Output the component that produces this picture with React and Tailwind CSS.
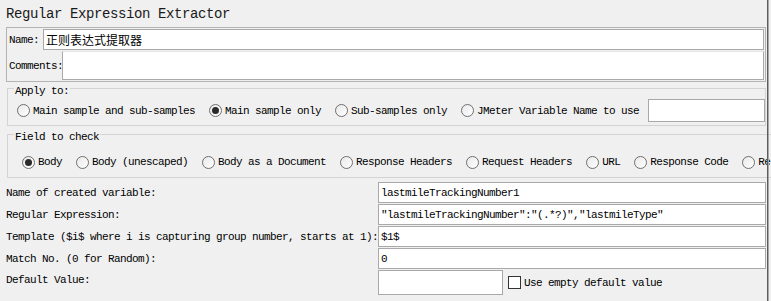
const mono = { fontFamily: "'Liberation Mono', 'Noto Sans CJK SC', monospace" }

function Radio({ label, checked }) {
  return (
    <span className="inline-flex shrink-0 items-center whitespace-nowrap">
      <span className="flex h-[13px] w-[13px] items-center justify-center rounded-full border border-[#6f6f6f] bg-gradient-to-br from-[#e9e9e9] to-white">
        {checked ? <span className="h-[7px] w-[7px] rounded-full bg-[#2a2a2a]" /> : null}
      </span>
      <span className="ml-[3px]">{label}</span>
    </span>
  )
}

function Field({ value, className = '' }) {
  return (
    <div className={`flex h-[21px] items-center border border-[#a9a9a9] bg-white px-[2px] ${className}`}>
      <span className="whitespace-nowrap">{value}</span>
    </div>
  )
}

const applyOptions = [
  { label: 'Main sample and sub-samples' },
  { label: 'Main sample only', checked: true },
  { label: 'Sub-samples only' },
  { label: 'JMeter Variable Name to use' },
]

const fieldOptions = [
  { label: 'Body', checked: true },
  { label: 'Body (unescaped)' },
  { label: 'Body as a Document' },
  { label: 'Response Headers' },
  { label: 'Request Headers' },
  { label: 'URL' },
  { label: 'Response Code' },
  { label: 'Response Message' },
]

const rows = [
  { label: 'Name of created variable:', value: 'lastmileTrackingNumber1' },
  { label: 'Regular Expression:', value: '"lastmileTrackingNumber":"(.*?)","lastmileType"' },
  { label: 'Template ($i$ where i is capturing group number, starts at 1):', value: '$1$' },
  { label: 'Match No. (0 for Random):', value: '0' },
]

export default function App() {
  return (
    <div className="flex h-[301px] w-[771px] overflow-hidden bg-[#f0f0f0] text-[11px] leading-[12px] tracking-[-0.6px] text-black" style={mono}>
      <div className="w-[767px] shrink-0 pr-[1px]">
        <div className="flex h-[27px] items-center pl-[6px] text-[14px] tracking-[-0.4px] text-[#1a1a1a]">
          Regular Expression Extractor
        </div>

        <div className="ml-[6px] border border-[#b4b4b4] p-[1px]">
          <div className="flex h-[21px] items-center">
            <span className="w-[35px] pl-[1px]">Name:</span>
            <div className="flex h-[21px] flex-1 items-center border border-[#a9a9a9] bg-white px-[2px] text-[12px] tracking-normal" style={{ fontFamily: "'Noto Sans CJK SC', sans-serif" }}>
              正则表达式提取器
            </div>
          </div>
          <div className="mt-[1px] flex h-[29px] items-center">
            <span className="w-[54px] pl-[1px]">Comments:</span>
            <div className="h-[29px] flex-1 border border-[#a9a9a9] border-t-[#e6e6e6] bg-white" />
          </div>
        </div>

        <fieldset className="ml-[7px] mt-[-3px] border border-[#d3d3d3] pb-[3px] pl-[9px]">
          <legend className="ml-[-3px] px-[1px] pt-[6px]">Apply to:</legend>
          <div className="mt-[2px] flex h-[23px] items-center gap-[14px]">
            {applyOptions.map((o) => (
              <Radio key={o.label} label={o.label} checked={o.checked} />
            ))}
            <div className="ml-[-5px] h-[23px] flex-1 border border-[#a9a9a9] bg-white" />
          </div>
        </fieldset>

        <fieldset className="ml-[7px] mt-[-1px] border border-[#d3d3d3] pb-[4px] pl-[14px]">
          <legend className="ml-[-8px] px-[1px] pt-[6px]">Field to check</legend>
          <div className="mt-[8px] flex h-[22px] items-center gap-[14px] overflow-hidden">
            {fieldOptions.map((o) => (
              <Radio key={o.label} label={o.label} checked={o.checked} />
            ))}
          </div>
        </fieldset>

        <div className="mt-[4px] flex flex-col gap-[1px]">
          {rows.map((r) => (
            <div key={r.label} className="flex items-center">
              <span className="w-[378px] shrink-0 whitespace-nowrap pl-[6px]">{r.label}</span>
              <Field value={r.value} className="flex-1" />
            </div>
          ))}
          <div className="flex items-center">
            <span className="mt-[-5px] w-[378px] shrink-0 pl-[6px]">Default Value:</span>
            <div className="h-[25px] w-[125px] border border-[#a9a9a9] bg-white" />
            <span className="ml-[5px] h-[13px] w-[13px] border border-[#333] bg-white" />
            <span className="ml-[3px]">Use empty default value</span>
          </div>
        </div>
      </div>
      <div className="w-px shrink-0 bg-[#5c5c5c]" />
      <div className="w-px shrink-0 bg-[#a8a8a8]" />
    </div>
  )
}
